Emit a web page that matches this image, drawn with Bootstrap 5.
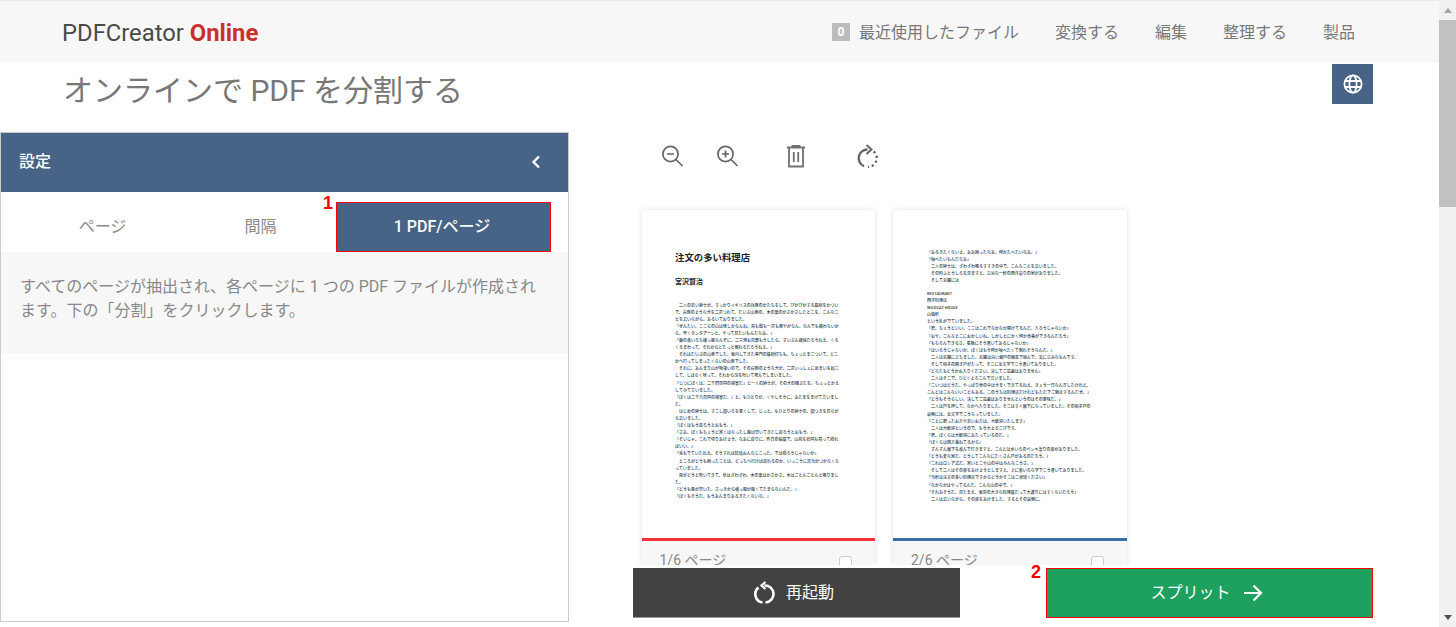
<!DOCTYPE html>
<html lang="ja">
<head>
<meta charset="UTF-8">
<title>オンラインで PDF を分割する</title>
<link href="https://cdn.jsdelivr.net/npm/bootstrap@5.3.0/dist/css/bootstrap.min.css" rel="stylesheet">
<style>
html, body { height: 627px; overflow: hidden; }
body { font-family: Roboto, "Noto Sans CJK JP", sans-serif; color: #777; background: #fff; }
.app-shell { height: 627px; }
.main-area { width: 1439px; height: 627px; overflow: hidden; }

.top-bar { height: 63px; background: #f7f7f7; border-top: 1px solid #e9e9e9; padding: 0 84px 0 62px; }
.logo-text { font-size: 23.8px; color: #4a4a4a; text-decoration: none; line-height: 1; padding-top: 3px; }
.logo-text b { color: #c9302c; font-weight: 700; }
.top-link { font-size: 16px; color: #777; text-decoration: none; margin-left: 36px; padding-top: 1px; white-space: nowrap; }
.count-box { width: 18px; height: 18px; background: #bcbcbc; color: #fff; font-size: 12px; font-weight: 700; margin-right: 9px; }

.title-row { height: 69px; padding-left: 63px; padding-right: 66px; }
.page-title { font-size: 30px; font-weight: 400; color: #777; margin: 10px 0 0; line-height: 36px; }
.globe-btn { width: 41px; height: 40px; background: #476385; border-radius: 0; padding: 0; border: 0; margin-top: 1px; }

.settings-col { width: 569px; height: 490px; border: 1px solid #ccc; flex: none; }
.settings-head { height: 59px; background: #476385; color: #fff; font-size: 16px; font-weight: 500; padding: 0 27px 2px 18px; }
.tab-row { height: 60px; padding: 10px 17px 0 23px; }
.tab-plain { width: 157px; height: 50px; font-size: 16px; color: #8a8a8a; text-align: center; }
.tab-plain.next { width: 155px; padding-left: 4px; }
.tab-on { width: 215px; height: 50px; background: #476385; color: #fff; font-size: 16px; font-weight: 500; border: 1px solid #f00; border-radius: 0; padding: 0 3px 0 0; }
.settings-text { height: 102px; background: #f7f7f7; padding: 23px 20px 0 19px; font-size: 16px; line-height: 24px; color: #888; }

.preview-col { padding-left: 72.5px; }
.tool-row { height: 78px; }
.tool-ico { position: absolute; }
.tool-set { width: 240px; height: 78px; position: relative; }
.page-row { gap: 18px; }
.page-tile { width: 233.5px; border: 0; border-radius: 2px; box-shadow: 0 0 5px rgba(0,0,0,.13); flex: none; overflow: hidden; }
.page-sheet { height: 327.5px; padding: 42px 35px 0 33.5px; background: #fff; color: #222; overflow: hidden; }
.sheet-b { padding: 38.5px 35px 0 34px; }
.sheet-title { font-size: 9.4px; font-weight: 700; line-height: 12px; margin: 0 0 13.5px; color: #222; }
.sheet-author { font-size: 7px; font-weight: 700; line-height: 9px; margin: 0 0 15px; color: #222; }
.sheet-line { font-size: 4px; line-height: 7.1px; margin: 0; color: #333; font-weight: 500; }
.sheet-gap { margin-top: 6px; }
.mark-red { height: 3px; background: #f5323c; }
.mark-blue { height: 3px; background: #3a70ad; }
.tile-foot { height: 60px; background: #f7f7f7; padding: 9px 23px 0 18px; font-size: 14px; color: #888; }
.tick-box { width: 13px; height: 13px; border: 1px solid #ccc; border-radius: 3px; margin-top: 6px; background: #fff; }

.action-bar { position: absolute; left: 620px; top: 565px; width: 819px; height: 62px; background: #fff; padding: 3px 0 0 13px; gap: 86px; }
.act-btn { width: 327px; height: 50px; border-radius: 0; font-size: 16px; color: #fff; padding: 0; }
.act-dark { background: #424242; border: 0; border-bottom: 1px solid #999; gap: 11px; padding-right: 6px; }
.act-green { background: #1ea05f; border: 1px solid #f00; gap: 11px; padding-right: 5px; }
.act-dark:hover { background: #424242; color: #fff; }
.act-green:hover { background: #1ea05f; color: #fff; }

.note-num { position: absolute; color: #f00; font: 700 18px/20px "Liberation Sans", sans-serif; }

.fake-scroll { width: 17px; height: 627px; background: #f1f1f1; flex: none; }
.arrow-box { height: 20px; }
.arrow-up { border-left: 4px solid transparent; border-right: 4px solid transparent; border-bottom: 5px solid #a3a3a3; }
.arrow-down { border-left: 4px solid transparent; border-right: 4px solid transparent; border-top: 5px solid #505050; }
.scroll-thumb { height: 187px; background: #c1c1c1; }
</style>
</head>
<body>
<div class="app-shell d-flex position-relative">
  <div class="main-area">
    <nav class="top-bar d-flex align-items-center justify-content-between">
      <a class="logo-text" href="#">PDFCreator <b>Online</b></a>
      <div class="d-flex align-items-center">
        <span class="count-box d-flex align-items-center justify-content-center">0</span>
        <a class="top-link ms-0" href="#">最近使用したファイル</a>
        <a class="top-link" href="#">変換する</a>
        <a class="top-link" href="#">編集</a>
        <a class="top-link" href="#">整理する</a>
        <a class="top-link" href="#">製品</a>
      </div>
    </nav>

    <div class="title-row d-flex justify-content-between align-items-start">
      <h1 class="page-title">オンラインで PDF を分割する</h1>
      <button class="btn globe-btn d-flex align-items-center justify-content-center" type="button" aria-label="言語">
        <svg width="20" height="20" viewBox="0 0 20 20" fill="none" stroke="#fff" stroke-width="1.8">
          <circle cx="10" cy="10" r="8.6"/>
          <ellipse cx="10" cy="10" rx="3.6" ry="8.6"/>
          <path d="M1.8 7h16.4M1.8 13h16.4"/>
        </svg>
      </button>
    </div>

    <div class="d-flex">
      <section class="settings-col">
        <div class="settings-head d-flex align-items-center justify-content-between">
          <span>設定</span>
          <svg width="10" height="14" viewBox="0 0 10 14" fill="none" stroke="#fff" stroke-width="2.400"><path d="M8 1.500 2.500 7 8 12.500"/></svg>
        </div>
        <div class="tab-row d-flex">
          <div class="tab-plain d-flex align-items-center justify-content-center">ページ</div>
          <div class="tab-plain next d-flex align-items-center justify-content-center">間隔</div>
          <button class="btn tab-on" type="button">1 PDF/ページ</button>
        </div>
        <div class="settings-text">すべてのページが抽出され、各ページに 1 つの PDF ファイルが作成されます。下の「分割」をクリックします。</div>
      </section>

      <section class="preview-col flex-grow-1">
        <div class="tool-row">
          <div class="tool-set">
            <svg class="tool-ico" style="left:19px;top:11px" width="26" height="26" viewBox="0 0 26 26" fill="none" stroke="#666" stroke-width="1.700"><circle cx="9.500" cy="11" r="7.600"/><path d="M15 16.500 21.500 23M6 11h7"/></svg>
            <svg class="tool-ico" style="left:74px;top:11px" width="26" height="26" viewBox="0 0 26 26" fill="none" stroke="#666" stroke-width="1.700"><circle cx="9.500" cy="11" r="7.600"/><path d="M15 16.500 21.500 23M6 11h7M9.500 7.500v7"/></svg>
            <svg class="tool-ico" style="left:144px;top:12px" width="20" height="24" viewBox="0 0 20 24" fill="none" stroke="#707070" stroke-width="1.800"><path d="M1 3.500h18M6.500 3.500V2h7v1.500M3 3.500V22.500h14V3.500M7.800 8v10M12.200 8v10"/></svg>
            <svg class="tool-ico" style="left:214px;top:11px" width="24" height="28" viewBox="0 0 24 28" fill="none" stroke="#666" stroke-width="2.300">
              <path d="M11.500 6.500A8.700 8.700 0 0 0 8 23.200"/>
              <path d="M10.500 2 15.500 6.500 10.500 11" stroke-width="2"/>
              <path d="M17.600 8.500A8.700 8.700 0 0 1 12 23.900" stroke-dasharray="2.200 2.800"/>
            </svg>
          </div>
        </div>

        <div class="d-flex page-row">
          <div class="card page-tile">
            <div class="page-sheet">
              <p class="sheet-title">注文の多い料理店</p>
              <p class="sheet-author">宮沢賢治</p>
              <p class="sheet-line">　二人の若い紳士が、すっかりイギリスの兵隊のかたちをして、ぴかぴかする鉄砲をかついで、白熊のような犬を二疋つれて、だいぶ山奥の、木の葉のかさかさしたとこを、こんなことを云いながら、あるいておりました。</p>
              <p class="sheet-line">「ぜんたい、ここらの山は怪しからんね。鳥も獣も一疋も居やがらん。なんでも構わないから、早くタンタアーンと、やって見たいもんだなあ。」</p>
              <p class="sheet-line">「鹿の黄いろな横っ腹なんぞに、二三発お見舞もうしたら、ずいぶん痛快だろうねえ。くるくるまわって、それからどたっと倒れるだろうねえ。」</p>
              <p class="sheet-line">　それはだいぶの山奥でした。案内してきた専門の鉄砲打ちも、ちょっとまごついて、どこかへ行ってしまったくらいの山奥でした。</p>
              <p class="sheet-line">　それに、あんまり山が物凄いので、その白熊のような犬が、二疋いっしょにめまいを起こして、しばらく吠って、それから泡を吐いて死んでしまいました。</p>
              <p class="sheet-line">「じつにぼくは、二千四百円の損害だ」と一人の紳士が、その犬の眼ぶたを、ちょっとかえしてみて言いました。</p>
              <p class="sheet-line">「ぼくは二千八百円の損害だ。」と、もひとりが、くやしそうに、あたまをまげて言いました。</p>
              <p class="sheet-line">　はじめの紳士は、すこし顔いろを悪くして、じっと、もひとりの紳士の、顔つきを見ながら云いました。</p>
              <p class="sheet-line">「ぼくはもう戻ろうとおもう。」</p>
              <p class="sheet-line">「さあ、ぼくもちょうど寒くはなったし腹は空いてきたし戻ろうとおもう。」</p>
              <p class="sheet-line">「そいじゃ、これで切りあげよう。なあに戻りに、昨日の宿屋で、山鳥を拾円も買って帰ればいい。」</p>
              <p class="sheet-line">「兎もでていたねえ。そうすれば結局おんなじこった。では帰ろうじゃないか」</p>
              <p class="sheet-line">　ところがどうも困ったことは、どっちへ行けば戻れるのか、いっこうに見当がつかなくなっていました。</p>
              <p class="sheet-line">　風がどうと吹いてきて、草はざわざわ、木の葉はかさかさ、木はごとんごとんと鳴りました。</p>
              <p class="sheet-line">「どうも腹が空いた。さっきから横っ腹が痛くてたまらないんだ。」</p>
              <p class="sheet-line">「ぼくもそうだ。もうあんまりあるきたくないな。」</p>
            </div>
            <div class="mark-red"></div>
            <div class="tile-foot d-flex justify-content-between"><span>1/6 ページ</span><span class="tick-box"></span></div>
          </div>

          <div class="card page-tile">
            <div class="page-sheet sheet-b">
              <p class="sheet-line">「あるきたくないよ。ああ困ったなあ、何かたべたいなあ。」</p>
              <p class="sheet-line">「喰べたいもんだなあ」</p>
              <p class="sheet-line">　二人の紳士は、ざわざわ鳴るすすきの中で、こんなことを云いました。</p>
              <p class="sheet-line">　その時ふとうしろを見ますと、立派な一軒の西洋造りの家がありました。</p>
              <p class="sheet-line">　そして玄関には</p>
              <p class="sheet-line sheet-gap">RESTAURANT</p>
              <p class="sheet-line">西洋料理店</p>
              <p class="sheet-line">WILDCAT HOUSE</p>
              <p class="sheet-line">山猫軒</p>
              <p class="sheet-line">という札がでていました。</p>
              <p class="sheet-line">「君、ちょうどいい。ここはこれでなかなか開けてるんだ。入ろうじゃないか」</p>
              <p class="sheet-line">「おや、こんなとこにおかしいね。しかしとにかく何か食事ができるんだろう」</p>
              <p class="sheet-line">「もちろんできるさ。看板にそう書いてあるじゃないか」</p>
              <p class="sheet-line">「はいろうじゃないか。ぼくはもう何か喰べたくて倒れそうなんだ。」</p>
              <p class="sheet-line">　二人は玄関に立ちました。玄関は白い瀬戸の煉瓦で組んで、実に立派なもんです。</p>
              <p class="sheet-line">　そして硝子の開き戸がたって、そこに金文字でこう書いてありました。</p>
              <p class="sheet-line">「どなたもどうかお入りください。決してご遠慮はありません」</p>
              <p class="sheet-line">　二人はそこで、ひどくよろこんで言いました。</p>
              <p class="sheet-line">「こいつはどうだ、やっぱり世の中はうまくできてるねえ、きょう一日なんぎしたけれど、こんどはこんないいこともある。このうちは料理店だけれどもただでご馳走するんだぜ。」</p>
              <p class="sheet-line">「どうもそうらしい。決してご遠慮はありませんというのはその意味だ。」</p>
              <p class="sheet-line">　二人は戸を押して、なかへ入りました。そこはすぐ廊下になっていました。その硝子戸の裏側には、金文字でこうなっていました。</p>
              <p class="sheet-line">「ことに肥ったお方や若いお方は、大歓迎いたします」</p>
              <p class="sheet-line">　二人は大歓迎というので、もう大よろこびです。</p>
              <p class="sheet-line">「君、ぼくらは大歓迎にあたっているのだ。」</p>
              <p class="sheet-line">「ぼくらは両方兼ねてるから」</p>
              <p class="sheet-line">　ずんずん廊下を進んで行きますと、こんどは水いろのペンキ塗りの扉がありました。</p>
              <p class="sheet-line">「どうも変な家だ。どうしてこんなにたくさん戸があるのだろう。」</p>
              <p class="sheet-line">「これはロシア式だ。寒いとこや山の中はみんなこうさ。」</p>
              <p class="sheet-line">　そして二人はその扉をあけようとしますと、上に黄いろな字でこう書いてありました。</p>
              <p class="sheet-line">「当軒は注文の多い料理店ですからどうかそこはご承知ください」</p>
              <p class="sheet-line">「なかなかはやってるんだ。こんな山の中で。」</p>
              <p class="sheet-line">「それあそうだ。見たまえ、東京の大きな料理屋だって大通りにはすくないだろう」</p>
              <p class="sheet-line">　二人は云いながら、その扉をあけました。するとその裏側に、</p>
            </div>
            <div class="mark-blue"></div>
            <div class="tile-foot d-flex justify-content-between"><span>2/6 ページ</span><span class="tick-box"></span></div>
          </div>
        </div>
      </section>
    </div>
  </div>

  <aside class="fake-scroll d-flex flex-column">
    <div class="arrow-box d-flex align-items-center justify-content-center"><span class="arrow-up"></span></div>
    <div class="scroll-thumb"></div>
    <div class="flex-grow-1"></div>
    <div class="arrow-box d-flex align-items-center justify-content-center"><span class="arrow-down"></span></div>
  </aside>

  <div class="action-bar d-flex">
    <button class="btn act-btn act-dark d-flex align-items-center justify-content-center" type="button">
      <svg width="22" height="24" viewBox="0 0 22 24" fill="none" stroke="#fff" stroke-width="2.600"><path d="M11.500 4.500a8.500 8.500 0 0 1 1 17M9.500 21.500A8.500 8.500 0 0 1 5.500 6.500"/><path d="M12.500 1 8.500 4.500l4 3.500" stroke-width="2.200"/></svg>
      <span>再起動</span>
    </button>
    <button class="btn act-btn act-green d-flex align-items-center justify-content-center" type="button">
      <span>スプリット</span>
      <svg width="22" height="20" viewBox="0 0 22 20" fill="none" stroke="#fff" stroke-width="2.200"><path d="M2 10h17M11.500 2.500 19 10l-7.500 7.500"/></svg>
    </button>
  </div>

  <span class="note-num" style="left:323px;top:193px">1</span>
  <span class="note-num" style="left:1031px;top:562px">2</span>
</div>
<script src="https://cdn.jsdelivr.net/npm/bootstrap@5.3.0/dist/js/bootstrap.bundle.min.js"></script>
</body>
</html>
